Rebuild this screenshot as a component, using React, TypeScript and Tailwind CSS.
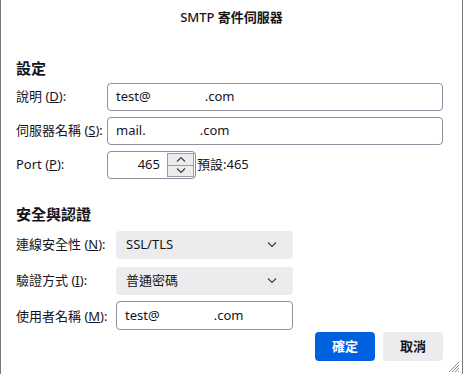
import React from 'react';

const font = { fontFamily: '"Noto Sans", "Noto Sans CJK TC", sans-serif' };

const Label = ({ text, k, rest }: { text: string; k: string; rest?: string }) => (
  <span className="text-[13px] text-[#15141a] whitespace-nowrap">
    {text} (<span className="underline">{k}</span>){rest ?? ':'}
  </span>
);

const Chevron = ({ up }: { up?: boolean }) => (
  <svg width="10" height="6" viewBox="0 0 10 6" fill="none">
    <path
      d={up ? 'M1 5.5 L5 1.5 L9 5.5' : 'M1 0.5 L5 4.5 L9 0.5'}
      stroke="#3b3b3b"
      strokeWidth="1.1"
    />
  </svg>
);

const TextBox = ({ value, className }: { value: string; className: string }) => (
  <div
    className={`h-[28px] flex items-center px-[8px] border border-[#8f8f9d] rounded-[4px] text-[13px] text-[#15141a] whitespace-pre ${className}`}
  >
    {value}
  </div>
);

const Select = ({ value }: { value: string }) => (
  <div className="w-[177px] h-[28px] flex items-center justify-between pl-[10px] pr-[16px] bg-[#ececef] rounded-[4px] text-[13px] text-[#15141a]">
    <span>{value}</span>
    <Chevron />
  </div>
);

export default function App() {
  return (
    <div
      className="relative w-[463px] h-[374px] bg-white border-x border-[#7a7a7a] overflow-hidden"
      style={font}
    >
      <div className="h-[34px] flex items-center justify-center text-[13px] text-[#15141a] pt-[1px] whitespace-pre">
        <span className="font-medium">SMTP </span>
        <span className="font-bold">寄件伺服器</span>
      </div>

      <div className="pl-[15px] pr-[19px]">
        <div className="mt-[24px] text-[15px] font-bold text-[#15141a] leading-[20px]">設定</div>

        <div className="mt-[5px] grid grid-cols-[91px_1fr] gap-y-[6px] items-center">
          <Label text="說明" k="D" />
          <TextBox value="test@                .com" className="" />
          <Label text="伺服器名稱" k="S" />
          <TextBox value="mail.                .com" className="h-[27px]" />
          <Label text="Port" k="P" />
          <div className="flex items-center">
            <div className="w-[89px] h-[28px] flex items-center border border-[#8f8f9d] rounded-[4px] text-[13px] text-[#15141a]">
              <span className="flex-1 text-right pr-[7px]">465</span>
              <div className="w-[27px] h-[24px] mr-[1px] flex flex-col border border-[#9a9aa4] bg-[#ececef]">
                <div className="flex-1 flex items-center justify-center border-b border-[#9a9aa4]">
                  <Chevron up />
                </div>
                <div className="flex-1 flex items-center justify-center">
                  <Chevron />
                </div>
              </div>
            </div>
            <span className="ml-[1px] text-[13px] text-[#15141a]">預設:465</span>
          </div>
        </div>

        <div className="mt-[25px] text-[15px] font-bold text-[#15141a] leading-[20px]">安全與認證</div>

        <div className="mt-[7px] grid grid-cols-[100px_177px] gap-y-[8px] items-center">
          <Label text="連線安全性" k="N" />
          <Select value="SSL/TLS" />
          <Label text="驗證方式" k="I" />
          <Select value="普通密碼" />
          <Label text="使用者名稱" k="M" />
          <TextBox value="test@                .com" className="h-[29px] mt-[-2px]" />
        </div>

        <div className="mt-[2px] flex justify-end gap-[8px]">
          <button className="w-[60px] h-[29px] rounded-[4px] bg-[#0061e0] text-white text-[13px] font-bold">
            確定
          </button>
          <button className="w-[60px] h-[29px] rounded-[4px] bg-[#ececef] text-[#15141a] text-[13px] font-bold">
            取消
          </button>
        </div>
      </div>

      <svg className="absolute right-[2px] bottom-[1px]" width="14" height="14" viewBox="0 0 14 14">
        <path d="M13 3 L3 13 M13 6 L6 13 M13 9 L9 13 M13 12 L12 13" stroke="#8a8a8a" strokeWidth="1" />
      </svg>
    </div>
  );
}
